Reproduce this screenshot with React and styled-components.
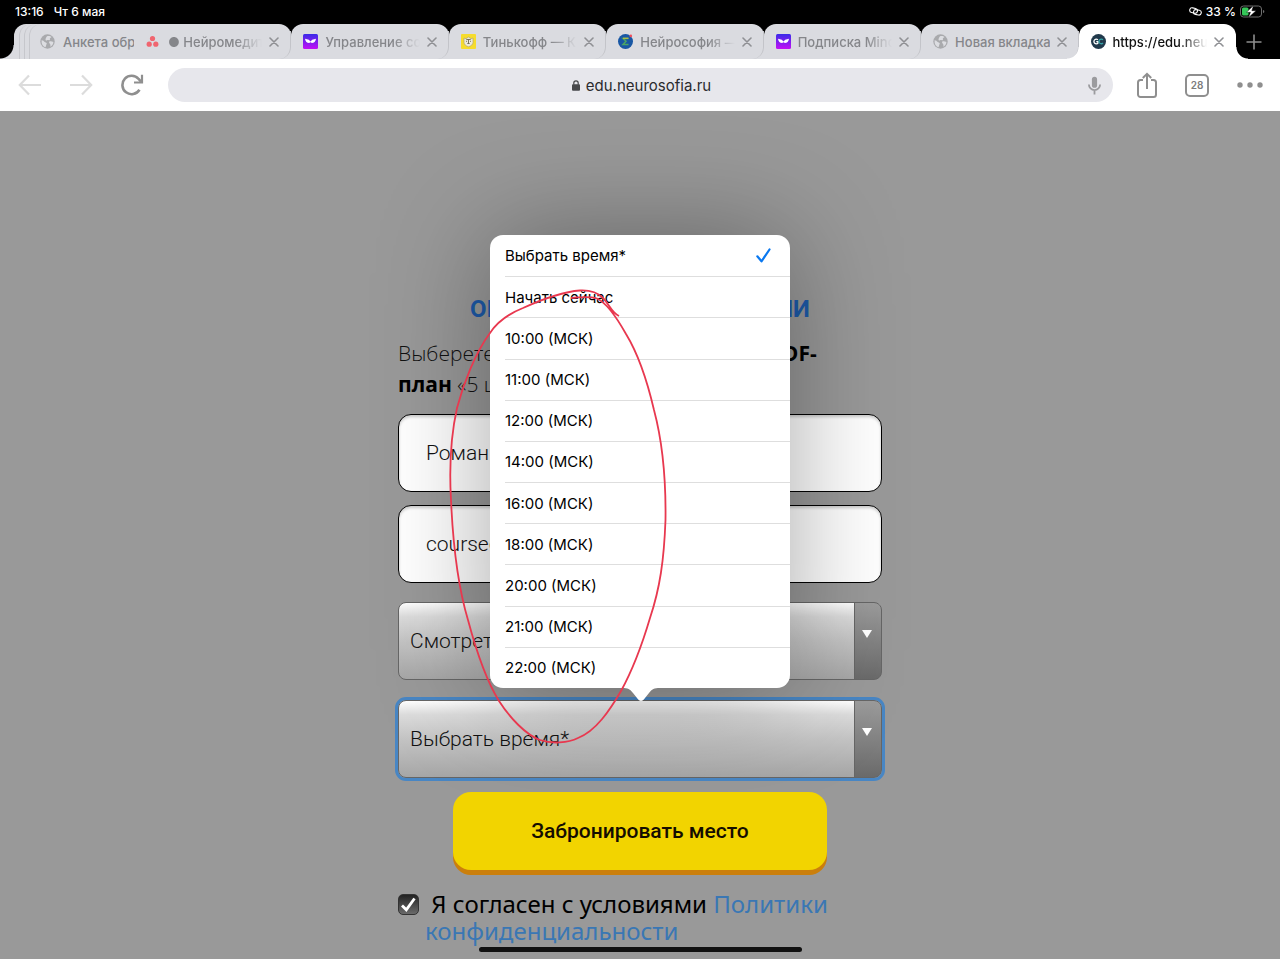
import { useState } from "react";
import styled, { createGlobalStyle, css } from "styled-components";

const TIMES = [
  "Выбрать время*",
  "Начать сейчас",
  "10:00 (МСК)",
  "11:00 (МСК)",
  "12:00 (МСК)",
  "14:00 (МСК)",
  "16:00 (МСК)",
  "18:00 (МСК)",
  "20:00 (МСК)",
  "21:00 (МСК)",
  "22:00 (МСК)",
];

const GlobeIcon = () => (
  <svg width="15" height="15" viewBox="0 0 15 15">
    <circle cx="7.5" cy="7.5" r="7.2" fill="#a9aaad" />
    <path d="M1.6 6.2c1.4.2 2.4.8 3.1 1.8.5.7 1.6.3 2 1.2.4.8-.7 1.3-.6 2.3 0 .7-.3 1.3-.9 1.7C2.8 12.3 1.2 9.6 1.6 6.2zM7 2.2c1.7-.7 3.5-.2 4.7.9-.6.5-1.2.5-1.7 1.1-.5.7.4 1.1-.2 1.7-.8.7-1.9-.2-2.7.4-.8.5-1.7-.2-1.6-1.1C5.7 4.1 6.2 3 7 2.2zM9.3 7.6c1.1-.6 2.7-.2 4.1.5-.1 2-1.2 3.7-2.9 4.7-.3-.9.2-1.6-.2-2.3-.4-.9-1.9-1.9-1-2.9z" fill="#dcdde1" />
  </svg>
);

const DotsIcon = () => (
  <svg width="15" height="15" viewBox="0 0 15 15" fill="#f0656f">
    <circle cx="6.5" cy="4.5" r="2.6" />
    <circle cx="3.2" cy="10.2" r="2.6" />
    <circle cx="9.8" cy="10.2" r="2.6" />
  </svg>
);

const WingsIcon = ({ id }) => (
  <svg width="15" height="15" viewBox="0 0 15 15">
    <defs>
      <linearGradient id={id} x1="0" y1="0" x2="0" y2="1">
        <stop offset="0" stopColor="#3a2be8" />
        <stop offset="1" stopColor="#c310f5" />
      </linearGradient>
    </defs>
    <rect width="15" height="15" rx="1.5" fill={`url(#${id})`} />
    <path d="M2 4.8l3.8 1 1.7 1.7 1.7-1.7 3.8-1c-.3 2.6-2 4.3-4.1 4.3L7.5 8.300l-1.400.8C4 9.100 2.300 7.400 2 4.800z" fill="#fff" />
  </svg>
);

const BankIcon = () => (
  <svg width="15" height="15" viewBox="0 0 15 15">
    <rect width="15" height="15" rx="1" fill="#f6dc2d" />
    <path d="M3 4l2 .7L7.500 3l2.500 1.700 2-.7v4.500c0 2-2 3.500-4.500 4.300C5 12 3 10.500 3 8.500z" fill="#ece9dc" stroke="#b3a66b" strokeWidth=".7" />
    <path d="M5.300 5.500h4.400M7.500 5.500v4M6.300 9.500h2.400M5 7.300h1M9 7.300h1" stroke="#6d6850" strokeWidth=".9" fill="none" />
  </svg>
);

const SofiaIcon = () => (
  <svg width="15" height="15" viewBox="0 0 15 15">
    <circle cx="7.5" cy="7.5" r="7.5" fill="#1857a4" />
    <path d="M10.500 4.500H5l3 2.800L5 10.500h5.500" stroke="#4aa564" strokeWidth="1.5" fill="none" />
    <path d="M5 4.200h5.500" stroke="#d9c93d" strokeWidth="1" />
    <circle cx="12.8" cy="1.9" r="1.3" fill="#ef4d5b" />
  </svg>
);

const SchoolIcon = () => (
  <svg width="15" height="15" viewBox="0 0 15 15">
    <circle cx="7.5" cy="7.5" r="7.5" fill="#21394b" />
    <path d="M6.900 5.900A2.300 2.300 0 1 0 7 9V7.600H5.300" stroke="#fff" strokeWidth="1.3" fill="none" />
    <path d="M12 5.900A2.300 2.300 0 1 0 12 9" stroke="#36a3a8" strokeWidth="1.3" fill="none" />
  </svg>
);

const CloseIcon = () => (
  <svg width="10" height="10" viewBox="0 0 10 10" stroke="currentColor" strokeWidth="1.6" strokeLinecap="round">
    <path d="M1 1l8 8M9 1L1 9" />
  </svg>
);

const TABS = [
  { title: "● Нейромедитация", icon: <DotsIcon />, fade: true },
  { title: "Управление совещаниями", icon: <WingsIcon id="wings-a" />, fade: true },
  { title: "Тинькофф — Кредит", icon: <BankIcon />, fade: true },
  { title: "Нейрософия — школа", icon: <SofiaIcon />, fade: true },
  { title: "Подписка Mindbox", icon: <WingsIcon id="wings-b" />, fade: true },
  { title: "Новая вкладка", icon: <GlobeIcon /> },
  { title: "https://edu.neurosofia.ru", icon: <SchoolIcon />, active: true, fade: true },
];

const StatusIcons = () => (
  <StatusGroup $right>
    <svg width="13" height="9" viewBox="0 0 13 9" fill="none" stroke="#fff" strokeWidth="1.1">
      <rect x=".7" y="1" width="7.8" height="4.8" rx="2.4" transform="rotate(12 4 3.5)" />
      <rect x="4.5" y="3" width="7.8" height="4.8" rx="2.4" transform="rotate(12 8.6 5.4)" />
    </svg>
    <span>33 %</span>
    <svg width="25" height="13" viewBox="0 0 25 13">
      <rect x=".5" y="1" width="21" height="11" rx="3" fill="none" stroke="#6d6d6d" />
      <path d="M23 5v3c1-.3 1.300-.8 1.300-1.500S24 5.300 23 5z" fill="#6d6d6d" />
      <rect x="2" y="2.5" width="6.5" height="8" rx="1.5" fill="#35c759" />
      <path d="M13.500.5L6.500 7.300h4l-2 5.200L16 5.700h-4.200z" fill="#fff" stroke="#000" strokeWidth=".4" />
    </svg>
  </StatusGroup>
);

const SelectField = ({ label, focused, children, options, value, onChange }) => (
  <SelectWrap>
    <Select aria-label={label} $focused={focused} value={value} onChange={onChange}>
      {options.map((o) => <option key={o}>{o}</option>)}
    </Select>
    {children}
  </SelectWrap>
);

const App = () => {
  const [time, setTime] = useState(TIMES[0]);
  return (
    <Screen>
      <GlobalStyle />
      <StatusBar>
        <StatusGroup>
          <span>13:16</span>
          <span>Чт 6 мая</span>
        </StatusGroup>
        <StatusIcons />
      </StatusBar>

      <TabStrip>
        <TabStack>
          <Sliver />
          <Sliver />
          <Sliver />
          <StackedTab>
            <GlobeIcon />
            <span>Анкета обр</span>
          </StackedTab>
        </TabStack>
        {TABS.map((tab) => (
          <Tab key={tab.title} $active={tab.active}>
            {tab.icon}
            <TabTitle $fade={tab.fade}>{tab.title}</TabTitle>
            <IconButton aria-label="Закрыть"><CloseIcon /></IconButton>
          </Tab>
        ))}
        <NewTab aria-label="Новая вкладка">
          <svg width="16" height="16" viewBox="0 0 16 16" stroke="#8d8d8d" strokeWidth="1.6">
            <path d="M8 .5v15M.5 8h15" />
          </svg>
        </NewTab>
      </TabStrip>

      <Toolbar>
        <NavGroup>
          <IconButton aria-label="Назад">
            <svg width="24" height="22" viewBox="0 0 24 22" fill="none" stroke="#dcdcdc" strokeWidth="2.2">
              <path d="M23 11H2M11 1.500L1.800 11l9.200 9.500" />
            </svg>
          </IconButton>
          <IconButton aria-label="Вперёд">
            <svg width="24" height="22" viewBox="0 0 24 22" fill="none" stroke="#dcdcdc" strokeWidth="2.2">
              <path d="M1 11h21M13 1.500l9.200 9.500-9.200 9.500" />
            </svg>
          </IconButton>
          <IconButton aria-label="Обновить">
            <svg width="24" height="22" viewBox="0 0 24 22" fill="none" stroke="#8f8f8f" strokeWidth="2.6">
              <path d="M19.500 15.800A9.200 9.200 0 1 1 18.600 5l2.400 2.600" />
              <path d="M22 .8v7.700h-8" strokeWidth="2.2" />
            </svg>
          </IconButton>
        </NavGroup>
        <Omnibox>
          <Address>
            <svg width="8" height="11" viewBox="0 0 8 11">
              <rect y="4.3" width="8" height="6.5" rx="1" fill="#47484b" />
              <path d="M1.800 4.800V3a2.200 2.200 0 0 1 4.400 0v1.800" fill="none" stroke="#47484b" strokeWidth="1.2" />
            </svg>
            edu.neurosofia.ru
          </Address>
          <IconButton aria-label="Голосовой поиск">
            <svg width="13" height="19" viewBox="0 0 13 19" fill="none" stroke="#9b9b9e" strokeWidth="1.8">
              <rect x="3.9" y=".8" width="5.2" height="11" rx="2.6" fill="#9b9b9e" stroke="none" />
              <path d="M.9 8.500a5.600 5.600 0 0 0 11.200 0M6.500 14v4.500" />
            </svg>
          </IconButton>
        </Omnibox>
        <ActionGroup>
          <IconButton aria-label="Поделиться">
            <svg width="20" height="26" viewBox="0 0 20 26" fill="none" stroke="#8f8f8f" strokeWidth="2">
              <path d="M6 8H3.500A2.500 2.500 0 0 0 1 10.500v12A2.500 2.500 0 0 0 3.500 25h13a2.500 2.500 0 0 0 2.500-2.500v-12A2.500 2.500 0 0 0 16.500 8H14M10 17V2M5.800 6L10 1.800 14.200 6" />
            </svg>
          </IconButton>
          <TabCount>28</TabCount>
          <IconButton aria-label="Меню">
            <svg width="26" height="6" viewBox="0 0 26 6" fill="#8f8f8f">
              <circle cx="3" cy="3" r="2.7" />
              <circle cx="13" cy="3" r="2.7" />
              <circle cx="23" cy="3" r="2.7" />
            </svg>
          </IconButton>
        </ActionGroup>
      </Toolbar>

      <Page>
        <Form onSubmit={(e) => e.preventDefault()}>
          <Title>ОНЛАЙН-НЕЙРОМЕДИТАЦИИ</Title>
          <Lead>
            Выберете время и получите подарок <b>PDF-план</b> «5 шагов к себе»
          </Lead>
          <Fields>
            <Input aria-label="Имя" defaultValue="Роман" />
            <Input aria-label="Эл. почта" defaultValue="coursedesign@mail.ru" />
          </Fields>
          <Selects>
            <SelectField label="День" options={["Смотреть сегодня"]} />
            <SelectField
              label="Время"
              focused
              options={TIMES}
              value={time}
              onChange={(e) => setTime(e.target.value)}
            >
              <Popover>
                {TIMES.map((t) => (
                  <li key={t}>
                    <Option type="button" onClick={() => setTime(t)}>
                      {t}
                      {t === time && (
                        <svg width="15" height="15" viewBox="0 0 15 15" fill="none" stroke="#0a78f0" strokeWidth="2.2" strokeLinecap="round" strokeLinejoin="round">
                          <path d="M1.300 8.300l4.200 5L13.500 1.500" />
                        </svg>
                      )}
                    </Option>
                  </li>
                ))}
                <Arrow width="38" height="13" viewBox="0 0 38 13">
                  <path d="M0 0c6 0 8 1 11 5l5 6.300c1.800 2.200 4.200 2.200 6 0L27 5c3-4 5-5 11-5z" fill="#fff" />
                </Arrow>
              </Popover>
              <Marker width="240" height="470" viewBox="440 280 240 470">
                <path d="M619 316C611 312 610 305 603 298C597 292 590 290 580 290.500C566 291.500 545 298 523 308C508 314 497 322 490 333C475 353 463 385 457 408C451 435 449 465 451 500C453 545 459 590 468 620C476 650 486 680 499 701C510 718 526 735 540 740C552 744 568 743 578 738C596 731 610 710 621 691C632 671 642 645 650 618C660 588 664 560 665.500 520C666 480 662 440 654 410C647 380 637 352 626 334C617 318 607 303 597 298.500C589 296 580 297 571 298" />
              </Marker>
            </SelectField>
          </Selects>
          <Submit>Забронировать место</Submit>
          <Consent>
            <CheckBox>
              <input id="consent" type="checkbox" defaultChecked />
              <svg width="21" height="21" viewBox="0 0 21 21" fill="none" stroke="#fff" strokeWidth="2.8">
                <path d="M4 11.500l4.300 4.300L16.500 4.500" />
              </svg>
            </CheckBox>
            <label htmlFor="consent">
              &nbsp;Я согласен с условиями <a href="#policy">Политики конфиденциальности</a>
            </label>
          </Consent>
        </Form>
      </Page>
      <HomeIndicator />
    </Screen>
  );
};

const GlobalStyle = createGlobalStyle`
  * {
    box-sizing: border-box;
  }
  body {
    margin: 0;
    background: #999;
    font-family: Inter, "Liberation Sans", sans-serif;
  }
  button {
    font: inherit;
    border: 0;
    padding: 0;
    background: none;
    cursor: pointer;
  }
  svg {
    flex: none;
    display: block;
  }
`;

const Screen = styled.div`
  display: flex;
  flex-direction: column;
  height: 100vh;
  overflow: hidden;
`;

const StatusBar = styled.header`
  display: flex;
  justify-content: space-between;
  flex: none;
  height: 24px;
  padding: 0 15px 2px;
  background: #000;
  color: #fff;
  font-size: 12px;
  font-weight: 500;
`;

const StatusGroup = styled.div`
  display: flex;
  align-items: center;
  gap: ${({ $right }) => ($right ? "4px" : "10px")};
`;

const TabStrip = styled.nav`
  display: flex;
  flex: none;
  height: 35px;
  padding-left: 14px;
  background: #000;
  color: #85868a;
  font-size: 13px;
  font-weight: 500;
`;

const tabShape = css`
  background: #dadbe0;
  border-radius: 12px 12px 0 0;
`;

const TabStack = styled.div`
  ${tabShape}
  position: relative;
  display: flex;
  width: 120px;
  border-top-right-radius: 0;
  box-shadow: 12px 0 0 #dadbe0;
  &::before {
    content: "";
    position: absolute;
    bottom: 0;
    right: 100%;
    width: 14px;
    height: 14px;
    background: radial-gradient(circle at 0 0, transparent 13px, #dadbe0 14px);
  }
`;

/* edges of the tabs hidden under the stack, 5px apart */
const Sliver = styled.div`
  flex: none;
  width: 14px;
  margin: 0 -14px 0 5px;
  border-left: 1px solid #c6c7cc;
  border-top-left-radius: 12px;
`;

const StackedTab = styled.div`
  display: flex;
  align-items: center;
  gap: 8px;
  min-width: 0;
  padding-left: 11px;
  overflow: hidden;
  white-space: nowrap;
`;

const Tab = styled.div`
  ${tabShape}
  position: relative;
  display: flex;
  align-items: center;
  flex: 1;
  gap: 7px;
  min-width: 0;
  padding: 0 12px;
  &::after {
    content: "";
    position: absolute;
    right: 0;
    bottom: 0;
    width: 12px;
    height: 28px;
    border-right: 1px solid #c3c4c9;
    border-bottom-right-radius: 12px;
  }
  ${({ $active }) => $active && css`
    background: #fff;
    color: #111;
    &::before,
    &::after {
      content: "";
      position: absolute;
      bottom: 0;
      left: 100%;
      width: 12px;
      height: 12px;
      border: 0;
      border-radius: 0;
      background: radial-gradient(circle at 100% 0, transparent 11px, #fff 12px);
    }
    &::before {
      left: auto;
      right: 100%;
      background: radial-gradient(circle at 0 0, transparent 11px, #fff 12px);
    }
  `}
`;

const TabTitle = styled.span`
  flex: 1;
  min-width: 0;
  overflow: hidden;
  white-space: nowrap;
  mask-image: ${({ $fade }) => ($fade ? "linear-gradient(to right, #000 72%, transparent)" : "none")};
`;

const IconButton = styled.button`
  display: flex;
  align-items: center;
  justify-content: center;
  flex: none;
  color: #8f9094;
`;

const NewTab = styled(IconButton)`
  width: 44px;
  padding-right: 8px;
`;

const Toolbar = styled.div`
  display: flex;
  align-items: center;
  flex: none;
  gap: 24px;
  height: 52px;
  padding: 0 17px 0 18px;
  background: #fff;
`;

const NavGroup = styled.div`
  display: flex;
  gap: 27px;
`;

const Omnibox = styled.div`
  display: flex;
  align-items: center;
  flex: 1;
  height: 34px;
  padding: 0 12px 0 27px;
  border-radius: 17px;
  background: #e7e7ec;
`;

const Address = styled.button`
  display: flex;
  align-items: center;
  justify-content: center;
  flex: 1;
  gap: 6px;
  color: #2b2b2e;
  font-size: 15px;
`;

const ActionGroup = styled.div`
  display: flex;
  align-items: center;
  gap: 28px;
`;

const TabCount = styled.button`
  width: 24px;
  height: 23px;
  border: 2px solid #8f8f8f;
  border-radius: 5px;
  color: #7c7c7c;
  font-size: 10px;
  font-weight: 600;
`;

const Page = styled.main`
  flex: 1;
  padding: 182px 16px 0;
  background: #999;
`;

const Form = styled.form`
  display: flex;
  flex-direction: column;
  max-width: 484px;
  margin: 0 auto;
`;

const Title = styled.h1`
  margin: 0;
  color: #1d5aa8;
  font-family: Roboto, sans-serif;
  font-size: 24px;
  font-weight: 700;
  line-height: 32px;
  text-align: center;
  white-space: nowrap;
`;

const Lead = styled.p`
  margin: 13px 0 14px;
  padding-right: 32px;
  color: #111;
  font-family: "Open Sans", sans-serif;
  font-size: 21px;
  font-weight: 300;
  line-height: 31px;
  b {
    color: #000;
    font-weight: 700;
  }
`;

const Fields = styled.div`
  display: grid;
  gap: 13px;
`;

const Selects = styled.div`
  display: grid;
  gap: 20px;
  margin-top: 19px;
`;

const fieldText = css`
  width: 100%;
  height: 78px;
  color: #111;
  font-family: Roboto, sans-serif;
  font-size: 21px;
  font-weight: 300;
`;

const Input = styled.input`
  ${fieldText}
  padding: 0 27px;
  border: 1px solid #000;
  border-radius: 13px;
  background: #fff;
  box-shadow: inset 0 2px 3px rgba(0, 0, 0, 0.2);
`;

const SelectWrap = styled.div`
  position: relative;
  &::before {
    content: "";
    position: absolute;
    top: 28px;
    right: 10px;
    border: 5px solid transparent;
    border-top: 8px solid #fff;
    border-bottom: 0;
    pointer-events: none;
  }
`;

const Select = styled.select`
  ${fieldText}
  display: block;
  appearance: none;
  padding: 0 40px 0 11px;
  border: 1px solid #666;
  border-radius: 8px;
  background:
    linear-gradient(#666, #666) right 26px top / 1px 100% no-repeat,
    linear-gradient(#9c9c9c, #6a6a6a) right / 26px 100% no-repeat,
    linear-gradient(#fff, #dcdcdc 18%, #c4c4c4 50%, #a6a6a6);
  outline: ${({ $focused }) => ($focused ? "3px solid #4886c4" : "none")};
`;

const Popover = styled.ul`
  position: absolute;
  bottom: calc(100% + 12px);
  left: 50%;
  display: grid;
  grid-auto-rows: 1fr;
  width: 300px;
  height: 453px;
  margin: 0 0 0 -150px;
  padding: 0 0 0 15px;
  border-radius: 13px;
  background: #fff;
  box-shadow: 0 0 110px rgba(0, 0, 0, 0.35);
  list-style: none;
  li + li {
    border-top: 1px solid #dedede;
  }
`;

const Option = styled.button`
  display: flex;
  align-items: center;
  justify-content: space-between;
  width: 100%;
  height: 100%;
  padding-right: 19px;
  color: #000;
  font-size: 15px;
  text-align: left;
`;

const Arrow = styled.svg`
  position: absolute;
  top: 100%;
  left: 132px;
`;

/* hand-drawn loop over the list of times */
const Marker = styled.svg`
  position: absolute;
  bottom: 28px;
  left: 42px;
  fill: none;
  stroke: #e8384f;
  stroke-width: 1.8;
  pointer-events: none;
`;

const Submit = styled.button`
  position: relative;
  align-self: center;
  width: 374px;
  max-width: 100%;
  height: 78px;
  margin: 14px 0 20px;
  border-radius: 18px;
  background: #f2d400;
  box-shadow: 0 5px 0 #cb7f0c;
  color: #150d00;
  font-family: Roboto, sans-serif;
  font-size: 21px;
  font-weight: 500;
`;

const Consent = styled.div`
  display: flex;
  align-items: flex-start;
  gap: 6px;
  color: #000;
  font-family: "Noto Sans", sans-serif;
  font-size: 24px;
  line-height: 27px;
  a {
    color: #3a77b4;
    text-decoration: none;
  }
`;

const CheckBox = styled.span`
  display: grid;
  margin-top: 4px;
  input,
  svg {
    grid-area: 1 / 1;
  }
  input {
    appearance: none;
    width: 21px;
    height: 21px;
    margin: 0;
    border: 1px solid #333;
    border-radius: 5px;
    background: linear-gradient(#222, #6a6a6a);
  }
  svg {
    pointer-events: none;
    z-index: 1;
  }
`;

const HomeIndicator = styled.div`
  position: fixed;
  bottom: 7px;
  left: 50%;
  width: 323px;
  height: 5px;
  margin-left: -161px;
  border-radius: 3px;
  background: #111;
`;

export default App;
